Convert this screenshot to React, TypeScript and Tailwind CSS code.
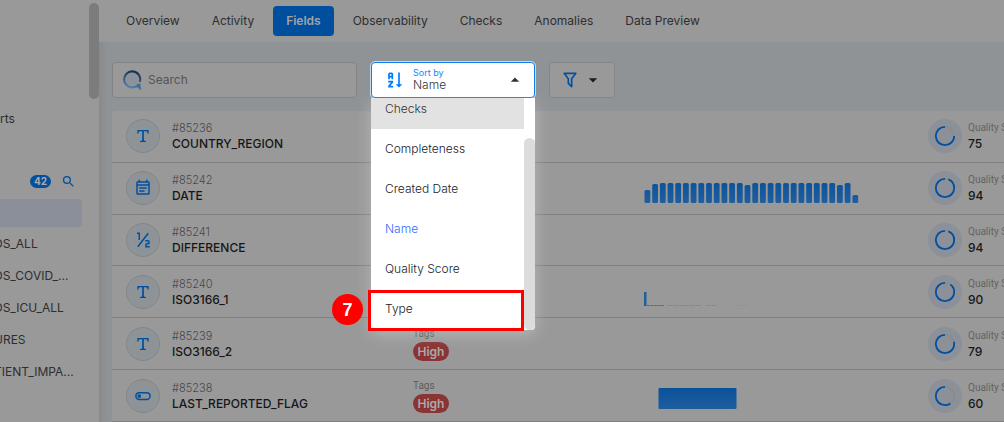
import React from "react";
import { MdOutlineEventNote } from "react-icons/md";

const paths = {
  text: "M3.500 3h17v5.500h-1.500c-.3-2.600-1-3.600-3-3.600h-2.700v12.900c0 1 .6 1.500 3 1.600v1.600H7.700v-1.600c2.400-.1 3-.6 3-1.600V4.900H8c-2 0-2.700 1-3 3.600H3.500z",
  fraction:
    "M5.79 21.61L4.21 20.39L18.21 2.39L19.79 3.61M4 2V4H6V12H8V2M15 12V14H19V16H17A2 2 0 0 0 15 18V22H21V20H17V18H19A2 2 0 0 0 21 16V14A2 2 0 0 0 19 12Z",
  toggle:
    "M7 9.500A2.500 2.500 0 0 1 9.500 12A2.500 2.500 0 0 1 7 14.500A2.500 2.500 0 0 1 4.500 12A2.500 2.500 0 0 1 7 9.500M17 6.500A5.500 5.500 0 0 1 22.500 12A5.500 5.500 0 0 1 17 17.500H7A5.500 5.500 0 0 1 1.500 12A5.500 5.500 0 0 1 7 6.500H17M7 8.500A3.500 3.500 0 0 0 3.500 12A3.500 3.500 0 0 0 7 15.500H17A3.500 3.500 0 0 0 20.500 12A3.500 3.500 0 0 0 17 8.500H7Z",
  sort: "M19 17H22L18 21L14 17H17V3H19M11 13V15L7.67 19H11V21H5V19L8.33 15H5V13M9 3H7C5.9 3 5 3.900 5 5V11H7V9H9V11H11V5C11 3.900 10.110 3 9 3M9 7H7V5H9Z",
  filter:
    "M15,19.88C15.04,20.18 14.94,20.5 14.71,20.71C14.32,21.1 13.69,21.1 13.3,20.71L9.29,16.7C9.06,16.47 8.96,16.16 9,15.87V10.75L4.21,4.62C3.87,4.19 3.95,3.56 4.38,3.22C4.57,3.08 4.78,3 5,3V3H19V3C19.22,3 19.43,3.08 19.62,3.22C20.05,3.56 20.13,4.19 19.79,4.62L15,10.75V19.88M7.04,5L11,10.06V15.58L13,17.58V10.05L16.96,5H7.04Z",
  search:
    "M9.5,3A6.5,6.5 0 0,1 16,9.5C16,11.11 15.41,12.59 14.44,13.73L14.71,14H15.5L20.5,19L19,20.5L14,15.5V14.71L13.73,14.44C12.59,15.41 11.11,16 9.5,16A6.5,6.5 0 0,1 3,9.5A6.5,6.5 0 0,1 9.5,3M9.5,5C7,5 5,7 5,9.5C5,12 7,14 9.5,14C12,14 14,12 14,9.5C14,7 12,5 9.5,5Z",
  down: "M7 10l5 5 5-5z",
  up: "M7 14l5-5 5 5z",
};

function Icon({ name, className }: { name: keyof typeof paths; className: string }) {
  return (
    <svg viewBox="0 0 24 24" fill="currentColor" aria-hidden="true" className={className}>
      <path d={paths[name]} />
    </svg>
  );
}

type Field = {
  id: string;
  name: string;
  kind: "text" | "date" | "fraction" | "toggle";
  score: number;
  tag?: string;
  chart?: "bars" | "spike" | "block";
};

const fields: Field[] = [
  { id: "#85236", name: "COUNTRY_REGION", kind: "text", score: 75 },
  { id: "#85242", name: "DATE", kind: "date", score: 94, chart: "bars" },
  { id: "#85241", name: "DIFFERENCE", kind: "fraction", score: 94 },
  { id: "#85240", name: "ISO3166_1", kind: "text", score: 90, chart: "spike" },
  { id: "#85239", name: "ISO3166_2", kind: "text", score: 79, tag: "High" },
  { id: "#85238", name: "LAST_REPORTED_FLAG", kind: "toggle", score: 60, tag: "High", chart: "block" },
];

const bars = [
  13, 19, 20, 20, 20, 20, 20, 20, 20, 20, 20, 20, 20, 18, 20, 20, 20, 20, 20, 20, 20, 20, 20, 20, 20, 18, 20, 8,
];

function Chart({ kind }: { kind: Field["chart"] }) {
  if (!kind) return null;
  return (
    <svg viewBox="0 0 220 26" className="mt-[6px] h-[26px] w-[220px]" role="img" aria-label="Value distribution">
      <defs>
        <linearGradient id="fill" x1="0" x2="0" y1="2" y2="25" gradientUnits="userSpaceOnUse">
          <stop offset="0" stopColor="#0b519a" />
          <stop offset="1" stopColor="#1f5f9e" />
        </linearGradient>
      </defs>
      {kind === "bars" &&
        bars.map((h, i) => (
          <rect key={i} x={0.5 + i * 7.7} y={25 - h} width="5.800" height={h} rx="1.500" fill="url(#fill)" />
        ))}
      {kind === "spike" && (
        <g>
          <rect x="0" y="10" width="2.500" height="14" fill="#1f5f9e" />
          <path d="M3 23.500h17" stroke="#4b6d92" strokeDasharray="3 .6" />
          <path d="M23 23.500h34M62 23.500h10" stroke="#818b97" strokeDasharray="5 .8" />
          <path d="M91 23.500h5M99 23.500h4" stroke="#8f9397" />
        </g>
      )}
      {kind === "block" && <rect x="14.500" y="2" width="78" height="21" rx="1" fill="url(#fill)" />}
    </svg>
  );
}

function Ring({ score }: { score: number }) {
  return (
    <span className="grid size-[34px] shrink-0 place-items-center rounded-full bg-[#8b9099]">
      <svg viewBox="0 0 22 22" className="size-[22px] -rotate-90" aria-hidden="true">
        <circle cx="11" cy="11" r="9.200" fill="none" stroke="#8a8a88" strokeWidth="1.600" />
        <circle
          cx="11"
          cy="11"
          r="9.200"
          fill="none"
          stroke="#00509f"
          strokeWidth="1.800"
          pathLength="100"
          strokeDasharray={`${score} 100`}
          transform="matrix(1 0 0 -1 0 22)"
        />
      </svg>
    </span>
  );
}

function FieldRow({ field }: { field: Field }) {
  return (
    <li className="flex items-center border-b border-[#828282] pl-[14px]">
      <span className="grid size-[34px] shrink-0 place-items-center rounded-full border border-[#83878a] bg-[#8e9397] text-[#00509f]">
        {field.kind === "date" ? (
          <MdOutlineEventNote className="size-[18px]" />
        ) : (
          <Icon name={field.kind} className={field.kind === "text" ? "size-4" : "size-[18px]"} />
        )}
      </span>
      <div className="ml-3 w-[241px] shrink-0">
        <p className="text-[11px] leading-4 font-light text-[#484848]">{field.id}</p>
        <p className="text-xs leading-4 font-medium text-[#161616]">{field.name}</p>
      </div>
      <div className="w-[231px] shrink-0">
        {field.tag && (
          <>
            <p className="font-['Roboto'] text-[10px] leading-4 text-[#5c5c5c]">Tags</p>
            <span className="block w-9 rounded-full bg-[#8b3436] text-center text-xs leading-[19px] font-semibold text-[#aaa]">
              {field.tag}
            </span>
          </>
        )}
      </div>
      <div className="w-[284px] shrink-0">
        <Chart kind={field.chart} />
      </div>
      <Ring score={field.score} />
      <div className="ml-[6px] shrink-0 whitespace-nowrap">
        <p className="font-['Roboto'] text-[10px] leading-4 text-[#636363]">Quality Score</p>
        <p className="text-xs leading-4 font-medium text-[#161616]">{field.score}</p>
      </div>
    </li>
  );
}

function SortSelect() {
  const options = ["Checks", "Completeness", "Created Date", "Name", "Quality Score", "Type"];
  return (
    <div className="relative z-10 ml-[14px] w-[164px] shrink-0">
      <button
        type="button"
        aria-haspopup="listbox"
        aria-expanded="true"
        className="flex h-9 w-full items-center rounded-sm border border-[#0d7df2] bg-white pr-[9px] pl-3 text-left outline outline-[#c8dcf0]"
      >
        <Icon name="sort" className="size-5 text-[#007bff]" />
        <span className="ml-[9px] flex-1">
          <span className="block text-[9px] leading-[10px] text-[#1686fb]">Sort by</span>
          <span className="block text-xs leading-[14px] font-light text-[#333]">Name</span>
        </span>
        <Icon name="up" className="size-5 text-[#333]" />
      </button>
      <div className="absolute inset-x-0 top-full flex h-[232px] rounded-b-sm bg-white shadow-[0_4px_16px_rgba(255,255,255,0.3)]">
        <ul
          role="listbox"
          aria-label="Sort by"
          className="flex flex-1 flex-col justify-end overflow-hidden pb-px"
        >
          {options.map((o) => (
            <li
              key={o}
              role="option"
              aria-selected={o === "Name"}
              className={`h-10 shrink-0 px-[14px] text-xs leading-10 font-light ${
                o === "Checks" ? "bg-[#e2e2e2] text-[#333]" : o === "Name" ? "text-[#2f6bff]" : "text-[#222]"
              }`}
            >
              {o}
            </li>
          ))}
        </ul>
        <div className="flex w-[11px] flex-col justify-end">
          <div className="h-48 rounded-full bg-[#dcdcdc]" />
        </div>
        <div className="absolute right-[11px] -bottom-px -left-[3px] h-[41px] border-3 border-[#f00]" />
        <span className="absolute bottom-[5px] -left-[39px] grid size-[31px] place-items-center rounded-full bg-[#f00] font-['Liberation_Sans'] text-lg font-bold text-white">
          7
        </span>
      </div>
    </div>
  );
}

function Sidebar() {
  const items = ["DS_ALL", "DS_COVID_...", "DS_ICU_ALL", "URES", "TIENT_IMPA..."];
  return (
    <aside className="flex w-[99px] shrink-0 overflow-hidden bg-[#999] text-xs text-[#2e2e2e]">
      <div className="w-[89px] shrink-0">
        <a href="#reports" className="block pt-[111px] leading-4">
          rts
        </a>
        <div className="mt-[46px] flex h-4 items-center pl-[30px]">
          <span className="w-[21px] rounded-full bg-[#00509f] text-center text-[10px] leading-[13px] font-bold text-[#aaa]">
            42
          </span>
          <button type="button" aria-label="Search tables" className="ml-[10px] text-[#00509f]">
            <Icon name="search" className="size-[15px]" />
          </button>
        </div>
        <div className="mt-[10px] mr-[7px] h-7 rounded-r-sm bg-[#8b8f9a]" />
        <ul className="mt-px -ml-[6px]">
          {items.map((t) => (
            <li key={t} className="h-8 leading-8 whitespace-nowrap">
              <a href="#table">{t}</a>
            </li>
          ))}
        </ul>
      </div>
      <div className="mt-[3px] h-24 w-[10px] rounded-full bg-[#7c7c7c]" />
    </aside>
  );
}

export default function App() {
  const tabs = ["Overview", "Activity", "Fields", "Observability", "Checks", "Anomalies", "Data Preview"];
  return (
    <div className="flex h-screen min-h-[400px] overflow-hidden bg-[#8f9396] font-['Inter',sans-serif]">
      <Sidebar />
      <main className="flex min-w-0 flex-1 flex-col shadow-[inset_8px_0_8px_-6px_rgba(0,0,0,0.08)]">
        <nav className="flex h-[42px] shrink-0 items-center gap-[6px] bg-[#999] pl-[14px]">
          {tabs.map((t) => (
            <button
              key={t}
              type="button"
              className={`h-[30px] rounded-sm px-[13px] text-xs whitespace-nowrap ${
                t === "Fields" ? "bg-[#004f9f] font-semibold text-[#a3a3a3]" : "text-[#2e2e2e]"
              }`}
            >
              {t}
            </button>
          ))}
        </nav>
        <div className="flex shrink-0 pt-5 pb-[13px] pl-[13px]">
          <label className="flex h-9 w-[245px] items-center rounded-sm border border-[#838383] bg-[#999] pl-[10px]">
            <svg viewBox="0 0 20 20" className="size-5 shrink-0" aria-hidden="true">
              <defs>
                <linearGradient id="mark" x1="0.7" y1="0" x2="0.400" y2="1">
                  <stop offset="0" stopColor="#123252" />
                  <stop offset="1" stopColor="#5683ad" />
                </linearGradient>
              </defs>
              <circle cx="9.200" cy="9.300" r="6.300" fill="#8b9299" />
              <path
                d="M16.700 12A8 8 0 1 0 12.300 16.700L14.500 16.200L17 18.500L16.200 14.800L13.500 15.800"
                fill="none"
                stroke="url(#mark)"
                strokeWidth="2.200"
              />
            </svg>
            <span className="sr-only">Search</span>
            <input
              type="search"
              placeholder="Search"
              className="ml-[5px] min-w-0 flex-1 bg-transparent text-xs text-[#222] outline-none placeholder:text-[#555]"
            />
          </label>
          <SortSelect />
          <button
            type="button"
            aria-label="Filter"
            className="ml-[14px] flex h-9 w-[66px] items-center rounded-sm border border-[#878787] bg-[#999] pl-[10px] text-[#00509f]"
          >
            <Icon name="filter" className="size-5" />
            <Icon name="down" className="ml-[3px] size-5 text-[#1c1c1c]" />
          </button>
        </div>
        <ul className="ml-[13px] grid flex-1 auto-rows-fr overflow-hidden rounded-tl-sm bg-[#999]">
          {fields.map((f) => (
            <FieldRow key={f.id} field={f} />
          ))}
        </ul>
      </main>
    </div>
  );
}
